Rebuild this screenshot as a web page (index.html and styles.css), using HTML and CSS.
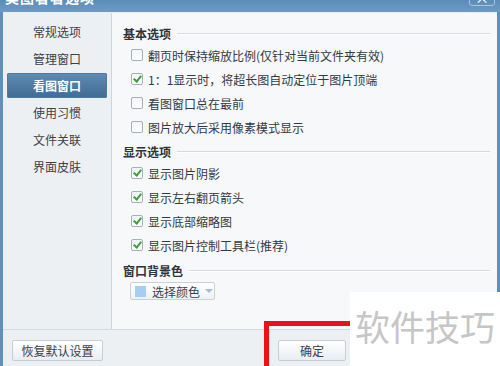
FILE: index.html
```html
<!DOCTYPE html>
<html>
<head>
    <title>美图看看选项</title>
    <link rel="stylesheet" href="styles.css">
</head>
<body>
    <div class="window">
        <div class="titlebar">
            <span class="title">美图看看选项</span>
            <span class="close">×</span>
        </div>
        <div class="main">
            <ul class="sidebar">
                <li>常规选项</li>
                <li>管理窗口</li>
                <li class="active">看图窗口</li>
                <li>使用习惯</li>
                <li>文件关联</li>
                <li>界面皮肤</li>
            </ul>
            <div class="content">
                <div class="section-title"><span>基本选项</span></div>
                <label class="option"><span class="check"></span>翻页时保持缩放比例(仅针对当前文件夹有效)</label>
                <label class="option"><span class="check on"></span>1：1显示时，将超长图自动定位于图片顶端</label>
                <label class="option"><span class="check"></span>看图窗口总在最前</label>
                <label class="option"><span class="check"></span>图片放大后采用像素模式显示</label>

                <div class="section-title second"><span>显示选项</span></div>
                <label class="option"><span class="check on"></span>显示图片阴影</label>
                <label class="option"><span class="check on"></span>显示左右翻页箭头</label>
                <label class="option"><span class="check on"></span>显示底部缩略图</label>
                <label class="option"><span class="check on"></span>显示图片控制工具栏(推荐)</label>

                <div class="section-title third"><span>窗口背景色</span></div>
                <button class="color-btn"><span class="swatch"></span><span class="label">选择颜色</span><span class="arrow"></span></button>
            </div>
        </div>
        <div class="footer">
            <button class="btn reset">恢复默认设置</button>
            <button class="btn ok">确定</button>
        </div>
    </div>

    <div class="highlight"></div>
    <div class="watermark">软件技巧</div>
</body>
</html>
```

FILE: styles.css
```css
:root {
    --frame: #5f90bb;
    --side-bg: #edf0f3;
    --content-bg: #f6f8fa;
    --line: #d3dae1;
    --text: #333a42;
    --font: "Noto Sans CJK SC", "Noto Sans", sans-serif;
}

* { box-sizing: border-box; margin: 0; padding: 0; }

body {
    width: 500px;
    height: 366px;
    overflow: hidden;
    font-family: var(--font);
    font-size: 12px;
    color: var(--text);
    background: #fff;
    position: relative;
}

.window {
    display: flex;
    flex-direction: column;
    height: 366px;
    background: var(--frame);
    padding: 0 3px 0 3px;
}

.titlebar {
    height: 12px;
    display: flex;
    align-items: flex-start;
    overflow: hidden;
    background: linear-gradient(180deg, #5b8cb8 0%, #6d9cc5 100%);
    margin: 0 -3px;
    padding: 0 5px 0 5px;
}

.title {
    display: block;
    color: #fff;
    font-weight: bold;
    font-size: 14px;
    line-height: 14px;
    margin-top: -10px;
    letter-spacing: 1px;
}

.close {
    margin-left: auto;
    margin-top: -12px;
    width: 26px;
    height: 18px;
    border: 1px solid #a9c6e0;
    border-radius: 3px;
    color: #fff;
    text-align: center;
    line-height: 16px;
    font-size: 14px;
}

.main {
    display: flex;
    height: 317px;
    border-top: 1px solid #e8eef4;
}

.sidebar {
    list-style: none;
    width: 109px;
    background: var(--side-bg);
    border-right: 1px solid #cdd5dd;
    padding: 5px 4px 0 4px;
}

.sidebar li {
    height: 27px;
    line-height: 27px;
    text-align: center;
    color: #3b4148;
}

.sidebar li.active {
    height: 25px;
    line-height: 25px;
    margin: 1px 0;
    color: #fff;
    font-weight: bold;
    border-radius: 2px;
    background: linear-gradient(180deg, #5f8cb3 0%, #3f6b94 100%);
    box-shadow: 0 0 0 1px #4d7aa2 inset;
}

.content {
    flex: 1;
    background: var(--content-bg);
    padding: 10px 7px 0 11px;
}

.section-title {
    display: flex;
    align-items: center;
    height: 20px;
    font-weight: bold;
    color: #2d343b;
}

.section-title::after {
    content: "";
    flex: 1;
    height: 1px;
    margin-left: 6px;
    background: var(--line);
    box-shadow: 0 1px 0 #fff;
}

.section-title.second { margin-top: 2px; }
.section-title.third { margin-top: 3px; }

.option {
    display: flex;
    align-items: center;
    height: 24px;
    padding-left: 8px;
    color: #333a42;
}

.check {
    width: 12px;
    height: 12px;
    margin-right: 5px;
    border: 1px solid #a4b0bc;
    border-radius: 2px;
    background: linear-gradient(180deg, #f3f5f7 0%, #ffffff 100%);
    position: relative;
}

.check.on::after {
    content: "";
    position: absolute;
    left: 3px;
    top: 0px;
    width: 3px;
    height: 6px;
    border: solid #3aa13a;
    border-width: 0 2px 2px 0;
    transform: rotate(40deg);
}

.color-btn {
    display: flex;
    align-items: center;
    margin: 2px 0 0 7px;
    width: 85px;
    height: 18px;
    padding: 0 4px;
    font-family: var(--font);
    font-size: 12px;
    color: #3a4149;
    white-space: nowrap;
    border: 1px solid #c9d1d9;
    border-radius: 2px;
    background: linear-gradient(180deg, #ffffff 0%, #eef1f4 100%);
}

.swatch {
    flex: none;
    width: 11px;
    height: 11px;
    margin-right: 6px;
    background: #a6cdf2;
}

.label { flex: none; }

.arrow {
    flex: none;
    margin-left: 5px;
    border-left: 4px solid transparent;
    border-right: 4px solid transparent;
    border-top: 4px solid #a8bccf;
}

.footer {
    display: flex;
    align-items: flex-start;
    flex: 1;
    background: var(--side-bg);
    border-top: 1px solid #d2d9e0;
    padding: 10px 0 0 9px;
}

.btn {
    height: 21px;
    font-family: var(--font);
    font-size: 12px;
    color: #3a4149;
    border: 1px solid #c5cdd5;
    border-radius: 2px;
    background: linear-gradient(180deg, #ffffff 0%, #e9edf1 100%);
}

.reset { width: 91px; }
.ok { width: 68px; margin-left: 175px; }

.highlight {
    position: absolute;
    left: 264px;
    top: 321px;
    width: 100px;
    height: 50px;
    border: 5px solid #e8121a;
}

.watermark {
    position: absolute;
    left: 350px;
    top: 292px;
    width: 150px;
    height: 74px;
    background: #fff;
    color: #c6c6c6;
    font-size: 35px;
    line-height: 68px;
    padding-left: 5px;
    white-space: nowrap;
}
```
